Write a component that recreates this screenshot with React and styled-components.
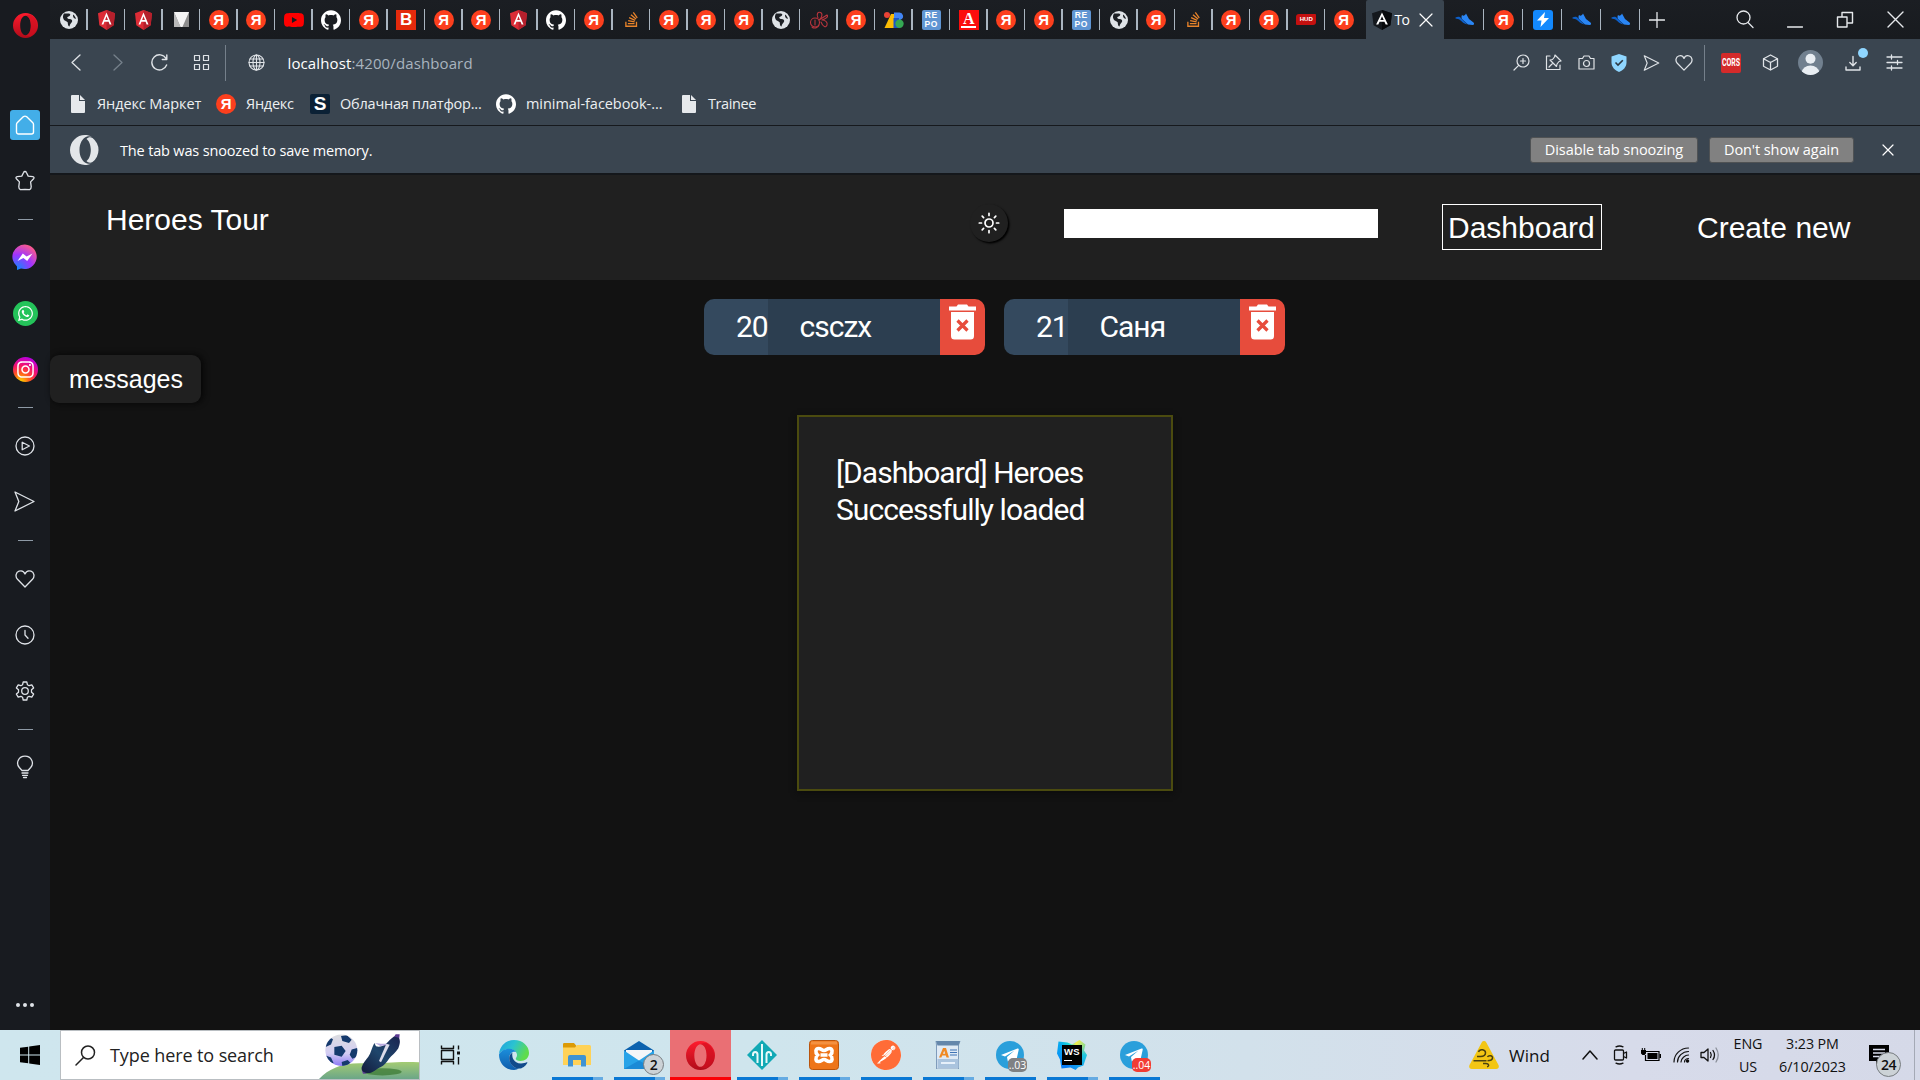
import React from 'react';
import styled, { createGlobalStyle, css } from 'styled-components';
import { SiGithub, SiYoutube, SiPostman } from 'react-icons/si';
import { FaStackOverflow, FaWhatsapp, FaInstagram } from 'react-icons/fa';

const Global = createGlobalStyle`
  * { box-sizing: border-box; }
  html, body { margin: 0; padding: 0; background: #121212; overflow: hidden; }
  svg { display: block; flex: none; }
`;

const ui = css`
  font-family: 'Open Sans', 'Noto Sans', sans-serif;
  white-space: nowrap;
`;

/* ---------- window frame ---------- */
const Screen = styled.div`
  width: 1920px;
  height: 1080px;
  display: flex;
  flex-direction: column;
  background: #121212;
`;
const Browser = styled.div`
  display: flex;
  height: 1030px;
`;
const Sidebar = styled.nav`
  width: 50px;
  display: flex;
  flex-direction: column;
  align-items: center;
  background: #181b20;
`;
const SideLogo = styled.div`
  height: 96.6px;
  padding-top: 13px;
`;
const SideItem = styled.div`
  height: 56.2px;
  display: flex;
  align-items: center;
  justify-content: center;
  color: #dfe3e8;
`;
const SideDash = styled.div`
  height: 20.2px;
  display: flex;
  align-items: center;
  &::before {
    content: '';
    width: 15px;
    height: 1px;
    background: #8e9aa6;
  }
`;
const HomeTile = styled.div`
  width: 30px;
  height: 30px;
  border-radius: 3px;
  background: #43aee8;
  display: flex;
  align-items: center;
  justify-content: center;
  color: #fff;
`;
const RoundApp = styled.div`
  width: 25px;
  height: 25px;
  border-radius: 50%;
  background: ${(p) => p.$bg};
  display: flex;
  align-items: center;
  justify-content: center;
  color: #fff;
`;
const SideMore = styled.div`
  margin-top: auto;
  height: 50px;
  display: flex;
  align-items: center;
  gap: 3px;
`;
const MoreDot = styled.i`
  width: 4px;
  height: 4px;
  border-radius: 50%;
  background: #dfe3e8;
`;
const Window = styled.div`
  flex: 1;
  min-width: 0;
  display: flex;
  flex-direction: column;
`;

/* ---------- tab strip ---------- */
const TabStrip = styled.div`
  height: 39px;
  display: flex;
  background: linear-gradient(#1b1e23, #181b1f);
  color: #e6e9ec;
`;
const Tab = styled.div`
  width: ${(p) => p.$w || 37.5}px;
  height: 39px;
  display: flex;
  align-items: center;
  justify-content: center;
  position: relative;
  flex: none;
  &::after {
    content: '';
    position: absolute;
    right: 0;
    top: 9px;
    height: 21px;
    width: 1.5px;
    background: ${(p) => (p.$last ? 'transparent' : '#a9b4bf')};
  }
`;
const ActiveTab = styled.div`
  ${ui}
  width: 78px;
  height: 39px;
  margin: 0 1.5px 0 3px;
  padding-left: 6px;
  display: flex;
  align-items: center;
  background: #3a4550;
  color: #fff;
  font-size: 14px;
  border-radius: 2px 2px 0 0;
`;
const TabTitle = styled.span`
  width: 17px;
  margin: 0 7px 0 3px;
  letter-spacing: -0.6px;
`;
const WindowButtons = styled.div`
  margin-left: auto;
  display: flex;
  align-items: center;
`;
const WinButton = styled.div`
  width: ${(p) => p.$w}px;
  display: flex;
  justify-content: center;
  padding-top: ${(p) => p.$top || 0}px;
`;
const YaDisc = styled.span`
  width: 20px;
  height: 20px;
  border-radius: 50%;
  background: #fc3f1d;
  color: #fff;
  display: flex;
  align-items: center;
  justify-content: center;
  font: 700 15px/20px 'Liberation Sans', sans-serif;
`;
const Tile = styled.span`
  width: ${(p) => p.$w || 20}px;
  height: 20px;
  border-radius: ${(p) => p.$r || 0}px;
  background: ${(p) => p.$bg};
  color: #fff;
  display: flex;
  flex-direction: column;
  align-items: center;
  justify-content: center;
  font: ${(p) => p.$font || "700 17px/18px 'Liberation Sans', sans-serif"};
  letter-spacing: ${(p) => p.$ls || 0}px;
`;
const LetterRule = styled.i`
  width: 15px;
  height: 2px;
  margin-top: 1px;
  background: #fff;
`;
const HudBadge = styled.span`
  width: 20px;
  height: 11px;
  border-radius: 3px 1px 3px 1px;
  background: #c4100f;
  color: #fff;
  text-align: center;
  font: 700 6px/11px 'Liberation Sans', sans-serif;
`;

/* ---------- toolbar ---------- */
const AddressBar = styled.div`
  height: 48px;
  display: flex;
  align-items: center;
  padding-bottom: 1px;
  background: #3a4550;
  color: #dfe3e7;
`;
const ToolSlot = styled.div`
  width: ${(p) => p.$w}px;
  display: flex;
  justify-content: center;
  color: ${(p) => p.$c || '#dfe3e7'};
  flex: none;
`;
const ToolRule = styled.div`
  width: 1px;
  height: 36px;
  background: #75808b;
  flex: none;
`;
const Url = styled.div`
  ${ui}
  flex: 1;
  margin-left: 1.5px;
  font-size: 15px;
  letter-spacing: 0.12px;
  color: #a9b4bf;
  b { font-weight: 400; color: #fff; }
`;
const DownloadWrap = styled.div`
  position: relative;
`;
const DownloadDot = styled.i`
  position: absolute;
  left: 13px;
  top: -7px;
  width: 10px;
  height: 10px;
  border-radius: 50%;
  background: #8fd6ff;
`;
const CorsTile = styled.span`
  width: 20px;
  height: 20px;
  border-radius: 2px;
  background: #d42a2a;
  color: #fff;
  display: flex;
  align-items: center;
  justify-content: center;
  font: 700 10px/20px 'Roboto', sans-serif;
  span { transform: scaleX(0.7); }
`;
const Bookmarks = styled.div`
  ${ui}
  height: 39px;
  display: flex;
  padding: 0 0 5px 21px;
  align-items: center;
  background: #3a4550;
  border-bottom: 1px solid #16191d;
  color: #eceff1;
  font-size: 14.5px;
`;
const Bookmark = styled.div`
  display: flex;
  align-items: center;
  width: ${(p) => p.$w}px;
  gap: ${(p) => p.$gap}px;
  letter-spacing: ${(p) => p.$ls}px;
`;
const BookmarkLabel = styled.span`
  margin-bottom: 1px;
`;
const SnoozeBar = styled.div`
  ${ui}
  height: 49px;
  display: flex;
  align-items: center;
  padding: 1px 26px 0 20px;
  background: #3a4550;
  border-bottom: 2px solid #14171b;
  color: #fff;
  font-size: 14.5px;
`;
const SnoozeText = styled.div`
  flex: 1;
  margin: 0 0 0 20px;
  letter-spacing: -0.16px;
`;
const SnoozeButton = styled.button`
  ${ui}
  width: ${(p) => p.$w}px;
  height: 26px;
  margin-right: ${(p) => p.$mr}px;
  padding: 0 0 1px;
  border: 1px solid #4f5254;
  border-radius: 3px;
  background: #818181;
  color: #fff;
  font-size: 14.5px;
  letter-spacing: -0.08px;
`;

/* ---------- page ---------- */
const Page = styled.div`
  flex: 1;
  display: flex;
  flex-direction: column;
  background: #121212;
  color: #fff;
`;
const Header = styled.header`
  height: 105px;
  display: flex;
  align-items: flex-start;
  padding: 27px 65px 0 56px;
  background: #202020;
  font: 30px/34px 'Liberation Sans', Arial, sans-serif;
`;
const Brand = styled.div`
  flex: 1;
  margin-top: 1px;
`;
const ThemeButton = styled.div`
  width: 38px;
  height: 38px;
  margin: 2px 56px 0 0;
  border-radius: 50%;
  display: flex;
  align-items: center;
  justify-content: center;
  background: #202020;
  box-shadow: 1.5px 1.5px 2px #000;
`;
const SearchField = styled.input`
  width: 314px;
  height: 29px;
  margin: 7px 64px 0 0;
  border: 0;
  background: #fff;
`;
const NavLink = styled.a`
  height: 46px;
  padding: 6px 5px 0;
  margin-top: 2px;
  margin-left: ${(p) => p.$ml || 0}px;
  border: 1px solid ${(p) => (p.$active ? '#fff' : 'transparent')};
  width: ${(p) => p.$w}px;
  white-space: nowrap;
`;
const Heroes = styled.div`
  display: flex;
  justify-content: center;
  padding-top: 19px;
  font: 30px/56px Roboto, sans-serif;
  letter-spacing: -1px;
`;
const HeroCard = styled.div`
  width: 281px;
  height: 56px;
  margin-left: 19px;
  display: flex;
  overflow: hidden;
  border-radius: 10px;
`;
const HeroId = styled.div`
  width: 64px;
  padding-left: 32px;
  background: #34495e;
`;
const HeroName = styled.div`
  flex: 1;
  padding-left: 31.5px;
  background: #2c3e50;
`;
const HeroDelete = styled.div`
  width: 45px;
  padding: 5px 0 0 9px;
  background: #e74c3c;
`;
const Messages = styled.div`
  width: 151px;
  height: 48px;
  padding-left: 19px;
  border-radius: 9px;
  background: #202020;
  box-shadow: 2px 0 6px #050505;
  font: 25px/48px 'Liberation Sans', Arial, sans-serif;
`;
const LogPanel = styled.div`
  align-self: center;
  width: 376px;
  height: 376px;
  margin-top: 12px;
  padding: 37px 36px 36px 37px;
  border: 2px solid #4b4b0f;
  background: #202020;
  box-shadow: 0 2px 6px #0c0c0c;
  font: 30px/37px Roboto, sans-serif;
  letter-spacing: -0.94px;
`;

/* ---------- taskbar ---------- */
const Taskbar = styled.footer`
  ${ui}
  height: 50px;
  display: flex;
  align-items: stretch;
  background: linear-gradient(90deg, #cfe6ee 0%, #cfe5ed 40%, #d2e1eb 65%, #d7dbea 85%, #d5d9e8 100%);
  color: #111;
`;
const StartButton = styled.div`
  width: 60px;
  display: flex;
  align-items: center;
  justify-content: center;
`;
const SearchBox = styled.div`
  width: 360px;
  display: flex;
  align-items: center;
  padding-left: 14px;
  border: 1px solid #b9bec2;
  background: #fff;
  font-size: 18px;
  letter-spacing: -0.1px;
  color: #222;
`;
const SearchLabel = styled.span`
  flex: 1;
  margin-left: 14px;
`;
const TaskCell = styled.div`
  width: ${(p) => p.$w || 62}px;
  display: flex;
  align-items: center;
  justify-content: center;
  position: relative;
  background: ${(p) => (p.$active ? '#ea6f74' : 'transparent')};
  &::after {
    content: '';
    position: absolute;
    bottom: 0;
    left: ${(p) => (p.$active ? 0 : 6)}px;
    right: ${(p) => (p.$active ? 0 : 5)}px;
    height: 3px;
    background: ${(p) =>
      p.$active ? '#fb0007' : p.$run === 2 ? 'linear-gradient(90deg,#0a78d4 41px,#66abe2 41px)' : p.$run ? '#0a78d4' : 'transparent'};
  }
`;
const CountBadge = styled.span`
  position: absolute;
  left: ${(p) => p.$x}px;
  top: ${(p) => p.$y}px;
  width: ${(p) => p.$s}px;
  height: ${(p) => p.$s}px;
  border: 1px solid #777c80;
  border-radius: 50%;
  background: #ccd2d6;
  text-align: center;
  font-size: ${(p) => p.$fs}px;
  font-weight: 600;
  line-height: ${(p) => p.$s - 2}px;
  letter-spacing: -0.5px;
`;
const ChatBadge = styled.span`
  position: absolute;
  left: 29px;
  top: 28px;
  width: 19px;
  height: 14px;
  border-radius: 5px;
  background: ${(p) => p.$bg};
  color: #fff;
  text-align: center;
  font-size: 10.5px;
  line-height: 14px;
`;
const PostmanDisc = styled.div`
  border-radius: 50%;
  background: #fff;
`;
const WebstormTile = styled.div`
  width: 30px;
  height: 30px;
  padding: 5px;
  background: conic-gradient(from 20deg, #f6ee4a, #21c7e0 70deg, #087cfa 190deg, #07a8f0 290deg, #1de0d0 330deg, #f6ee4a);
  clip-path: polygon(5% 5%, 35% 8%, 50% 15%, 75% 0, 95% 15%, 90% 35%, 100% 50%, 88% 85%, 70% 92%, 62% 100%, 45% 92%, 15% 95%, 10% 65%, 0 45%);
`;
const WebstormFace = styled.div`
  width: 20px;
  height: 20px;
  padding: 1px 0 0 2px;
  background: #000;
  color: #fff;
  font: 700 9.5px/11px 'Liberation Sans', sans-serif;
  letter-spacing: 0.3px;
  &::after {
    content: '';
    display: block;
    width: 8px;
    height: 1px;
    margin-top: 3px;
    background: #fff;
  }
`;
const Tray = styled.div`
  margin-left: auto;
  display: flex;
  align-items: center;
`;
const TraySlot = styled.div`
  width: ${(p) => p.$w}px;
  display: flex;
  justify-content: center;
`;
const Weather = styled.div`
  width: 107px;
  display: flex;
  align-items: center;
  gap: 10px;
  font-size: 17px;
`;
const TwoLines = styled.div`
  width: ${(p) => p.$w}px;
  margin-right: ${(p) => p.$mr || 0}px;
  text-align: center;
  font-size: 14.3px;
  line-height: 23px;
  letter-spacing: -0.1px;
  padding-bottom: ${(p) => p.$pb || 0}px;
`;
const Notifications = styled.div`
  width: 58px;
  height: 50px;
  margin-right: 5px;
  position: relative;
  border-right: 1px solid #a4a9b5;
  padding: 15px 0 0 12px;
`;

/* ---------- drawings ---------- */
const Line = ({ w, h, vb, sw = 1.3, children }) => (
  <svg width={w} height={h || w} viewBox={vb || `0 0 ${w} ${h || w}`} fill="none" stroke="currentColor" strokeWidth={sw} strokeLinecap="round" strokeLinejoin="round">
    {children}
  </svg>
);
const OperaO = ({ w, h }) => (
  <svg width={w} height={h} viewBox="0 0 24 24">
    <defs>
      <linearGradient id="opR" x1="0" y1="0" x2="0" y2="1">
        <stop offset="0" stopColor="#ff1b2d" />
        <stop offset="1" stopColor="#b00c1a" />
      </linearGradient>
    </defs>
    <path fillRule="evenodd" fill="url(#opR)" d="M12 0a12 12 0 1 0 0 24a12 12 0 1 0 0-24zM12 2.600c3 0 5.100 4.200 5.100 9.400s-2.100 9.400-5.100 9.400S6.900 17.200 6.900 12S9 2.600 12 2.600z" />
    <path fill="#d00f20" opacity=".6" d="M12 2.600c1.500-.9 3.500-1.300 5.400-.8A12 12 0 0 1 17.400 22.200c-1.900.5-3.900.1-5.400-.8c3 0 5.100-4.200 5.100-9.400S15 2.600 12 2.600z" />
  </svg>
);
const OperaMono = () => (
  <svg width="30" height="30" viewBox="0 0 30 30">
    <path d="M15 0a15 15 0 1 0 0 30c2.500 0 4.700-.6 6.700-1.800c-1.500.7-3.200.8-4.700.2C12.500 27 9.500 21.500 9.500 15S12.500 3 17 1.600c1.500-.5 3.200-.4 4.700.2C19.700.6 17.500 0 15 0z" fill="#e3e6e9" />
    <path d="M16.500 4C18 2.200 20.500 1.900 22.500 3a15 15 0 0 1 0 24c-2 1.100-4.500.8-6-1C19 24.500 20.800 20 20.800 15S19 5.500 16.500 4z" fill="#e3e6e9" />
  </svg>
);
const Globe = () => (
  <svg width="18" height="18" viewBox="0 0 18 18">
    <circle cx="9" cy="9" r="9" fill="#dfe3e7" />
    <path d="M4 2.500c2 .2 5-.4 6 .6s-.5 2.200-2 2.600S7.500 8 9.500 8s3 1 2.600 2.600S9.800 13 9.500 15.500c-1.500-.4-1.700-2.400-1.700-3.700S4.500 10 3.800 8.500S2.300 5.500 4 2.500zM13 3.500c1.500 1 2.600 2.500 2.900 4.500c-1.600-.3-3.300-1.800-2.900-4.500z" fill="#1d2025" />
  </svg>
);
const Angular = ({ dark }) => (
  <svg width={dark ? 20 : 17} height="20" viewBox="0 0 18 20" preserveAspectRatio="none">
    <path d="M9 0l9 3.200l-1.400 12L9 20l-7.600-4.800L0 3.200z" fill={dark ? '#14181d' : '#dd2c36'} />
    <path d="M9 0l9 3.200l-1.400 12L9 20z" fill={dark ? '#07090c' : '#b5202c'} />
    <path fillRule="evenodd" d="M9 2.400l5.300 12h-2l-1.100-2.700H6.800l-1.100 2.700h-2zM9 6.300L7.500 10h3z" fill="#fff" />
  </svg>
);
const VIcon = () => (
  <svg width="15" height="15" viewBox="0 0 16 16">
    <path d="M0 0h16v16H0z" fill="#8d8d8d" />
    <path d="M0 0h16L12 9L9 16H7z" fill="#f4f4f4" />
    <path d="M0 0l7 16H0z" fill="#b9b9b9" />
  </svg>
);
const Sneaker = () => (
  <svg width="20" height="13" viewBox="0 0 20 13">
    <path d="M7 2c1.500 1.500 3 .5 4-1.500l3 5.500l4.500 3.500c1 1 .8 2.500-1 2.500L13 11.500L8 7C6.500 6 6 3.500 7 2z" fill="#2a86f5" />
    <path d="M.5 4.500C3 3.300 5 3.500 6.500 5.500l6 6C9 11 7 8.500 5 7C3.500 6 2 5.700.5 5.500z" fill="#0d5fc8" />
  </svg>
);
const Doodle = () => (
  <Line w={20} sw={1.1}>
    <g stroke="#b9353d">
      <circle cx="6" cy="12.500" r="4.500" />
      <path d="M9 8C7 4 9 1.500 11.500 2.500S13 8 10 10l8-5c2 2-2 4-5 5c3 0 6 2 5 5s-4 2-6-3M6 10v5M3 17c2 2 6 1 7-2" />
    </g>
  </Line>
);
const ABIcon = () => (
  <svg width="20" height="16" viewBox="0 0 20 16">
    <path d="M7 2h4v14H.5z" fill="#fbbc04" />
    <circle cx="3" cy="3" r="3" fill="#ea4335" />
    <path d="M10 .5h5a3.700 3.700 0 0 1 2 7L10 11z" fill="#4285f4" />
    <path d="M9.500 6h5.500v10H9.500z" fill="#1a56c4" />
    <circle cx="15.500" cy="11.800" r="4.200" fill="#34a853" />
  </svg>
);
const FileIcon = () => (
  <svg width="14" height="18" viewBox="0 0 14 18">
    <path d="M1 0h7v6h6v11a1 1 0 0 1-1 1H1a1 1 0 0 1-1-1V1a1 1 0 0 1 1-1z" fill="#e6e9ec" />
    <path d="M9 0l5 5H9z" fill="#e6e9ec" />
  </svg>
);
const Cross = ({ s, sw }) => (
  <Line w={s} sw={sw}><path d={`M1 1L${s - 1} ${s - 1}M${s - 1} 1L1 ${s - 1}`} /></Line>
);
const HEART = 'M10 18L2.500 10.300C0 7.500 .8 3.300 4 2.200C6.500 1.300 9 2.500 10 5c1-2.500 3.500-3.700 6-2.800c3.200 1.100 4 5.300 1.500 8.100z';
const SEND = 'M1 1l19 9.500L1 20l3.800-9.500z';
const Trash = () => (
  <svg width="27" height="36" viewBox="0 0 27 36">
    <path d="M0 2.500h7.500L9 .5h9l1.500 2H27v4H0z" fill="#fff" />
    <path d="M2 8h23v24a3.500 3.500 0 0 1-3.500 3.500h-16A3.500 3.500 0 0 1 2 32z" fill="#fff" />
    <path d="M8.500 16.500l10 10M18.500 16.500l-10 10" stroke="#e74c3c" strokeWidth="3.200" />
  </svg>
);
const Sun = () => (
  <Line w={22} sw={1.700}>
    <circle cx="11" cy="11" r="4" />
    <path d="M11 1.300v2.200M11 18.500v2.200M1.300 11h2.200M18.500 11h2.200M4.200 4.200l1.400 1.400M16.400 16.400l1.400 1.400M4.200 17.800l1.400-1.400M16.400 5.600l1.400-1.400" />
  </Line>
);
const Messenger = () => (
  <svg width="26" height="26" viewBox="0 0 26 26">
    <defs>
      <radialGradient id="msg" cx=".2" cy="1" r="1.100">
        <stop offset="0" stopColor="#0a8cff" />
        <stop offset=".55" stopColor="#a033ff" />
        <stop offset="1" stopColor="#ff5c87" />
      </radialGradient>
    </defs>
    <path d="M13 .5A12.300 12.300 0 1 1 9 24.600L5 26v-3.600A12.300 12.300 0 0 1 13 .5z" fill="url(#msg)" />
    <path d="M5.500 17L10.800 9.500l3.800 3L20.500 9.500l-5.300 7.500l-3.800-3z" fill="#fff" />
  </svg>
);
const Gear = () => (
  <Line w={20} vb="0 0 20 20">
    <path d="M8.200 1h3.600l.6 2.700l1.700 1l2.700-.9l1.800 3.100L16.500 8.800v2.400l2.100 1.900l-1.800 3.100l-2.700-.9l-1.700 1l-.6 2.700H8.200l-.6-2.700l-1.700-1l-2.700.9l-1.800-3.100l2.100-1.900V8.800L1.400 6.900l1.800-3.100l2.700.9l1.700-1z" />
    <circle cx="10" cy="10" r="3.300" />
  </Line>
);
const Football = () => (
  <svg width="100" height="48" viewBox="0 9 300 147" preserveAspectRatio="none">
    <defs>
      <linearGradient id="grass" x1="0" y1="0" x2="0" y2="1">
        <stop offset="0" stopColor="#a3cb73" />
        <stop offset="1" stopColor="#6ba688" />
      </linearGradient>
      <linearGradient id="ball" x1="0" y1="0" x2="0" y2="1">
        <stop offset="0" stopColor="#dcdde0" />
        <stop offset=".6" stopColor="#d3cdf3" />
        <stop offset="1" stopColor="#8b78f5" />
      </linearGradient>
      <linearGradient id="boot" x1="0" y1="1" x2="1" y2="0">
        <stop offset="0" stopColor="#131b3c" />
        <stop offset=".5" stopColor="#1f466c" />
        <stop offset="1" stopColor="#1a2350" />
      </linearGradient>
      <clipPath id="ballClip"><circle cx="67" cy="68" r="48" /></clipPath>
    </defs>
    <path d="M0 156C30 124 70 106 130 108C190 110 220 102 300 105V156z" fill="url(#grass)" />
    <ellipse cx="190" cy="134" rx="58" ry="11" fill="#3c7a35" opacity=".75" />
    <circle cx="67" cy="68" r="48" fill="url(#ball)" />
    <g clipPath="url(#ballClip)" fill="#153a6d">
      <path d="M46 58l22-4l12 16l-12 18l-22-6zM66 24l18-2l14 14l-8 10l-20-6zM98 66l20-6l2 26l-20 8l-8-12zM18 42l14-14l10 6l-6 16l-16 8zM20 84l16 6l8 18l-18-2zM68 104l18-6l8 8l-10 12l-14-2z" />
    </g>
    <path d="M128 128l4 12l10-1l2-10l10-4l4 8l9-4l-2-10l9-5l5 6l7-7l-3-8l12-12l8 3l3-10l-5-6l12-14l8 2l2-11l10-2l-1-12l8-4l2-20l-12 0l-36 60l-60 40z" fill="#5b3a92" />
    <path d="M166 46l5 10c10 3 20 0 30-8c8-6 14-16 24-22l14 4c6 8 4 20-1 32c-8 14-20 22-28 32c-8 12-14 20-26 26c-14 6-22 18-36 18c-12 0-22-6-20-18c4-12 12-22 20-32c8-12 10-26 18-42z" fill="url(#boot)" />
    <path d="M202 48l10 3l-26 54l-6-4z" fill="#dcdcea" />
    <path d="M168 46l16 9l16-2l4-5l-18 0z" fill="#b9a9e0" />
  </svg>
);
const Edge = () => (
  <svg width="30" height="30" viewBox="0 0 30 30">
    <defs>
      <linearGradient id="eg" x1="0" y1="0" x2="1" y2=".4">
        <stop offset="0" stopColor="#1f9fe0" />
        <stop offset=".5" stopColor="#2bc3d0" />
        <stop offset="1" stopColor="#5fdc4c" />
      </linearGradient>
      <linearGradient id="eb" x1="0" y1="0" x2="0" y2="1">
        <stop offset="0" stopColor="#1b8fdc" />
        <stop offset="1" stopColor="#0f5cab" />
      </linearGradient>
    </defs>
    <path d="M0 14C.8 6 7 0 15 0c9 0 15 6.200 15 13c0 5-4 8-8.500 8c-3.500 0-5.200-1.300-4.700-2.600c.4-1 1.300-1.600 1.200-3.600C17.800 11.500 14.500 9 10.500 9C5.500 9 1.500 11.500 0 14z" fill="url(#eg)" />
    <path d="M0 14.500C1.500 11 5.500 8.700 10.500 8.700c3 0 5.500 1.400 6.700 3.300c-3.500-1.200-7 1.500-7 6c0 5.800 5 10.500 9.800 10.600C18.500 29.500 17 30 15 30C6.500 30 0 23.500 0 14.500z" fill="url(#eb)" />
    <path d="M10.200 18c0-2.500 1.500-4.500 3.200-5.200c-.8 4 1 10.700 8.600 10.700c2.500 0 4.300-.6 5.600-1.200c.6-.2 1 .2.700.7C26.500 26 23.500 28.600 20 28.600C15 28.600 10.200 24 10.200 18z" fill="#114a8b" />
  </svg>
);
const Folder = () => (
  <svg width="28" height="24" viewBox="0 0 28 24">
    <path d="M0 1.200A1.200 1.200 0 0 1 1.200 0H11l2.500 3H27v5H0z" fill="#dc9a05" />
    <path d="M0 4.500h12L14 2h12.500A1.500 1.500 0 0 1 28 3.500V22H0z" fill="#ffd257" />
    <path d="M5 23.500V14a2 2 0 0 1 2-2h14a2 2 0 0 1 2 2v9.500h-5V17h-8v6.500z" fill="#3f93d3" />
  </svg>
);
const Mail = () => (
  <svg width="30" height="28" viewBox="0 0 30 28">
    <path d="M0 9.500L15 0l15 9.500V28H0z" fill="#0c62ae" />
    <path d="M2 9h26v3L15 21L2 12z" fill="#f4f6f8" />
    <path d="M0 9.500l15 10L30 9.500V28H0z" fill="#28a3e8" />
    <path d="M0 28L15 19.500L30 28z" fill="#1b8ad6" />
  </svg>
);
const TelegramIcon = () => (
  <svg width="28" height="28" viewBox="0 0 28 28">
    <circle cx="14" cy="14" r="14" fill="#2a9fdb" />
    <path d="M5 14L21.500 7.500c.8-.3 1.400.2 1.200 1.200L20 21c-.2.9-.9 1-1.600.6L14 18.400l-2.200 2.200l-.8-4.600l7.500-6.500L9 15.500z" fill="#fff" />
  </svg>
);
const Trident = () => (
  <svg width="30" height="30" viewBox="0 0 30 30">
    <path d="M15 0l15 15l-15 15L0 15z" fill="#11a9b5" />
    <path d="M15 4v22M6 16v-1.500c0-3.500 4.500-3.500 4.500 0V23M24 16v-1.500c0-3.500-4.500-3.500-4.500 0V23" fill="none" stroke="#e8fafa" strokeWidth="2" />
  </svg>
);
const XamppIcon = () => (
  <svg width="30" height="30" viewBox="0 0 30 30">
    <rect x=".5" y=".5" width="29" height="29" rx="3" fill="#ee7519" stroke="#b9540c" />
    <path d="M2 1.500h26v3H2z" fill="#f9a35c" opacity=".6" />
    <path d="M9.500 8.500c3 0 3 2 5.500 2s2.500-2 5.500-2s3.500 4 1 6.500c2.500 2.500 2 6.500-1 6.500s-3-2-5.500-2s-2.500 2-5.500 2s-3.500-4-1-6.500c-2.500-2.500-2-6.500 1-6.500zM11.500 15h7" fill="none" stroke="#fff" strokeWidth="3.600" />
  </svg>
);
const WordDoc = () => (
  <svg width="26" height="28" viewBox="0 0 26 28">
    <path d="M1 0h24l-1.500 4V28H1.500V4z" fill="#dfeaf5" stroke="#7f9cbb" />
    <path d="M1 0h24l-1.500 4.500h-21z" fill="#6487ab" />
    <path d="M2.500 18h21v9h-21z" fill="#aac4de" />
    <path d="M15 9h7M15 11.500h7M15 14h7" stroke="#3f73b5" strokeWidth="1.200" />
    <path d="M6 22h14" stroke="#e6f0fa" strokeWidth="2" />
    <path fillRule="evenodd" d="M8 7h3l3 9.500h-2.500l-.7-2H7.200l-.8 2H4zM9.200 9.800L8 12.800h2.200z" fill="#f08a24" />
  </svg>
);
const Wind = () => (
  <svg width="30" height="28" viewBox="0 0 30 28">
    <path d="M12.700 1.500a2.600 2.600 0 0 1 4.600 0L29.500 24c.9 1.800 0 4-2.300 4H2.800C.5 28-.4 25.800.5 24z" fill="#f3c614" />
    <path d="M9.500 11c1.200-3.500 7-2.700 7 .8c0 2.600-2.500 3.700-5 3.700H8M4.500 19.800h13M18.500 16c1-2 5.500-1.500 5 1.200c-.4 2-2.500 2.600-5 2.600M14 22.500h3c3 0 3.500 3 1 3.200" fill="none" stroke="#4a4110" strokeWidth="1.500" />
  </svg>
);

const Ya = () => <YaDisc>Я</YaDisc>;
const Repo = () => (
  <Tile $bg="#5f95d3" $r={2} $w={19} $font="700 8.500px/9px 'Liberation Sans', sans-serif" $ls={0.5}>
    <span>RE</span><span>PO</span>
  </Tile>
);
const favicons = {
  globe: <Globe />,
  ng: <Angular />,
  v: <VIcon />,
  ya: <Ya />,
  yt: <SiYoutube size={20} color="#ff0000" />,
  gh: <SiGithub size={20} color="#fff" />,
  b: <Tile $bg="#e42a0c">B</Tile>,
  so: <FaStackOverflow size={17} color="#e8832a" />,
  dd: <Doodle />,
  ab: <ABIcon />,
  repo: <Repo />,
  a: <Tile $bg="#fb0d0d" $font="700 16px/13px 'Liberation Serif', serif">A<LetterRule /></Tile>,
  hud: <HudBadge>HUD</HudBadge>,
  sn: <Sneaker />,
  bolt: (
    <Tile $bg="#1389fd" $r={3}>
      <svg width="12" height="15" viewBox="0 0 12 15"><path d="M8 0L0 8.500h4.500L3.500 15L12 6H7z" fill="#fff" /></svg>
    </Tile>
  ),
};
const leftTabs = 'globe ng ng v ya ya yt gh ya b ya ya ng gh ya so ya ya ya globe dd ya ab repo a ya ya repo globe ya so ya ya hud ya'.split(' ');
const rightTabs = ['sn', 'ya', 'bolt', 'sn', 'sn'];

export default function App() {
  return (
    <Screen>
      <Global />
      <Browser>
        <Sidebar>
          <SideLogo><OperaO w={25} h={25} /></SideLogo>
          <SideItem>
            <HomeTile><Line w={20} sw={1.4}><path d="M1.500 9.500Q1.500 8.500 2.200 7.800L8.500 1.600Q10 .6 11.500 1.600L17.800 7.800Q18.500 8.500 18.500 9.500V17a2 2 0 0 1-2 2h-13a2 2 0 0 1-2-2z" /></Line></HomeTile>
          </SideItem>
          <SideItem><Line w={22}><path d="M11 1.500q1 0 1.400 1l1.800 3.600l4.600.6q2 .5.800 2l-3 3.200l.6 4.800q0 2.300-1.600 3L11 19.300l-4.600.4q-1.600-.7-1.600-3l.6-4.800l-3-3.200q-1.200-1.500.8-2l4.600-.6l1.800-3.600q.400-1 1.400-1z" /></Line></SideItem>
          <SideDash />
          <SideItem><Messenger /></SideItem>
          <SideItem><RoundApp $bg="#24c35a"><FaWhatsapp size={17} /></RoundApp></SideItem>
          <SideItem><RoundApp $bg="radial-gradient(circle at 30% 100%, #ffc800 5%, #ff5a1f 30%, #f5136b 55%, #c400d0 80%, #5a20ff)"><FaInstagram size={19} /></RoundApp></SideItem>
          <SideDash />
          <SideItem><Line w={20}><circle cx="10" cy="10" r="9" /><path d="M7.200 6.200v7.600l7.200-3.800z" /></Line></SideItem>
          <SideItem><Line w={22}><path d={SEND} /></Line></SideItem>
          <SideDash />
          <SideItem><Line w={20}><path d={HEART} /></Line></SideItem>
          <SideItem><Line w={20}><circle cx="10" cy="10" r="9" /><path d="M10 5.500V10l3 3.200" /></Line></SideItem>
          <SideItem><Gear /></SideItem>
          <SideDash />
          <SideItem><Line w={18} h={24}><path d="M6 15.500L3.300 12.500C-.5 8 2.500 1.200 9 1.200s9.500 6.800 5.700 11.300L12 15.500zM6 18h6M6.500 20.300h5M7.500 22.500h3" /></Line></SideItem>
          <SideMore><MoreDot /><MoreDot /><MoreDot /></SideMore>
        </Sidebar>

        <Window>
          <TabStrip>
            {leftTabs.map((k, i) => (
              <Tab key={i} $last={i === leftTabs.length - 1}>{favicons[k]}</Tab>
            ))}
            <ActiveTab>
              <Angular dark />
              <TabTitle>To</TabTitle>
              <Cross s={14} sw={1.2} />
            </ActiveTab>
            {rightTabs.map((k, i) => (
              <Tab key={i} $w={39}>{favicons[k]}</Tab>
            ))}
            <Tab $w={34} $last><Line w={16} sw={1.300}><path d="M8 .5v15M.5 8h15" /></Line></Tab>
            <WindowButtons>
              <WinButton $w={50}><Line w={20}><circle cx="8.500" cy="7.500" r="6.500" /><path d="M13 12.500l5 5" /></Line></WinButton>
              <WinButton $w={50} $top={14}><Line w={16} h={2} sw={1.500}><path d="M.5 1h15" /></Line></WinButton>
              <WinButton $w={50}><Line w={18} sw={1.400}><path d="M1.500 6h9.500v10H1.500zM6 6V1.500h10.500V12H11" /></Line></WinButton>
              <WinButton $w={50}><Cross s={17} sw={1.400} /></WinButton>
            </WindowButtons>
          </TabStrip>

          <AddressBar>
            <ToolSlot $w={51}><Line w={10} h={17}><path d="M9 1L1 8.500L9 16" /></Line></ToolSlot>
            <ToolSlot $w={33} $c="#76818b"><Line w={10} h={17}><path d="M1 1l8 7.500L1 16" /></Line></ToolSlot>
            <ToolSlot $w={50}><Line w={18} sw={1.400}><path d="M16 4.500A7.600 7.600 0 1 0 16.600 11M16.800 1v4.500h-4.500" /></Line></ToolSlot>
            <ToolSlot $w={34}><Line w={17} sw={1.200}><path d="M1.500 1.500h5v5h-5zM10.500 1.500h5v5h-5zM1.500 10.500h5v5h-5zM10.500 10.500h5v5h-5z" /></Line></ToolSlot>
            <ToolSlot $w={7} />
            <ToolRule />
            <ToolSlot $w={60}><Line w={17} sw={1.100}><circle cx="8.500" cy="8.500" r="7.500" /><ellipse cx="8.500" cy="8.500" rx="3.500" ry="7.500" /><path d="M8.500 1v15M1 8.500h15M2 5h13M2 12h13" /></Line></ToolSlot>
            <Url><b>localhost</b>:4200/dashboard</Url>
            <ToolSlot $w={32}><Line w={17} sw={1.200}><circle cx="10" cy="7" r="6" /><path d="M5.700 11.300L1 16M7.500 7h5M10 4.500v5" /></Line></ToolSlot>
            <ToolSlot $w={33}><Line w={17} sw={1.200}><path d="M5 2H1.500v13.500H15V11M10 1l6 6l-2 .5l-2 2.500l-.5 2.500L5 6l2.500-.5L9.500 3zM8 9l-4 4" /></Line></ToolSlot>
            <ToolSlot $w={33}><Line w={17} h={15} sw={1.200}><path d="M1 3.500h3.500L6 1h5l1.500 2.500H16V14H1z" /><circle cx="8.500" cy="8.500" r="3" /></Line></ToolSlot>
            <ToolSlot $w={32}>
              <svg width="16" height="18" viewBox="0 0 16 18">
                <path d="M8 0l7.500 2.500v6c0 4.500-3.500 8-7.500 9.500C4 16.500.5 13 .5 8.500v-6z" fill="#8fd6ff" />
                <path d="M4.500 8.500L7 11l4.800-4.800" fill="none" stroke="#2d3843" strokeWidth="1.600" />
              </svg>
            </ToolSlot>
            <ToolSlot $w={33}><Line w={17} h={16} vb="0 0 21 21" sw={1.500}><path d={SEND} /></Line></ToolSlot>
            <ToolSlot $w={32}><Line w={18} h={17} vb="0 0 20 19" sw={1.400}><path d={HEART} /></Line></ToolSlot>
            <ToolSlot $w={4} />
            <ToolRule />
            <ToolSlot $w={51}><CorsTile><span>CORS</span></CorsTile></ToolSlot>
            <ToolSlot $w={29}><Line w={17} sw={1.300}><path d="M8.500 1l7 3.700v7.600l-7 3.700l-7-3.700V4.700zM1.500 4.700l7 3.800l7-3.800M8.500 8.500V16" /></Line></ToolSlot>
            <ToolSlot $w={51}>
              <svg width="25" height="25" viewBox="0 0 25 25">
                <defs><clipPath id="av"><circle cx="12.500" cy="12.500" r="12.500" /></clipPath></defs>
                <g clipPath="url(#av)">
                  <path d="M0 0h25v25H0z" fill="#71808f" />
                  <circle cx="12.500" cy="8.700" r="5" fill="#e9eef3" />
                  <ellipse cx="12.500" cy="22" rx="8.500" ry="6.500" fill="#e9eef3" />
                </g>
              </svg>
            </ToolSlot>
            <ToolSlot $w={34}>
              <DownloadWrap>
                <Line w={16} sw={1.400}><path d="M8 1.500v9M4.800 7.500L8 10.700l3.200-3.200M1 12v3h14v-3" /></Line>
                <DownloadDot />
              </DownloadWrap>
            </ToolSlot>
            <ToolSlot $w={49}><Line w={17} sw={1.300}><path d="M1 3h15M1 8.500h15M1 14h15M5.500 1v4M11.500 6.500v4M5.500 12v4" /></Line></ToolSlot>
            <ToolSlot $w={1} />
          </AddressBar>

          <Bookmarks>
            <Bookmark $w={145} $gap={12} $ls={-0.1}><FileIcon /><BookmarkLabel>Яндекс Маркет</BookmarkLabel></Bookmark>
            <Bookmark $w={94} $gap={10} $ls={-0.25}><Ya /><BookmarkLabel>Яндекс</BookmarkLabel></Bookmark>
            <Bookmark $w={186} $gap={10} $ls={-0.22}>
              <Tile $bg="#0b2135" $r={2} $font="700 19px/20px 'Liberation Sans', sans-serif">S</Tile>
              <BookmarkLabel>Облачная платфор...</BookmarkLabel>
            </Bookmark>
            <Bookmark $w={186} $gap={10} $ls={-0.05}><SiGithub size={20} color="#fff" /><BookmarkLabel>minimal-facebook-...</BookmarkLabel></Bookmark>
            <Bookmark $w={90} $gap={12} $ls={-0.4}><FileIcon /><BookmarkLabel>Trainee</BookmarkLabel></Bookmark>
          </Bookmarks>

          <SnoozeBar>
            <OperaMono />
            <SnoozeText>The tab was snoozed to save memory.</SnoozeText>
            <SnoozeButton $w={168} $mr={11}>Disable tab snoozing</SnoozeButton>
            <SnoozeButton $w={145} $mr={28}>Don't show again</SnoozeButton>
            <Cross s={12} sw={1.200} />
          </SnoozeBar>

          <Page>
            <Header>
              <Brand>Heroes Tour</Brand>
              <ThemeButton><Sun /></ThemeButton>
              <SearchField />
              <NavLink $active $w={160}>Dashboard</NavLink>
              <NavLink $ml={89} $w={164}>Create new</NavLink>
            </Header>
            <Heroes>
              {[['20', 'csczx'], ['21', 'Саня']].map(([id, name]) => (
                <HeroCard key={id}>
                  <HeroId>{id}</HeroId>
                  <HeroName>{name}</HeroName>
                  <HeroDelete><Trash /></HeroDelete>
                </HeroCard>
              ))}
            </Heroes>
            <Messages>messages</Messages>
            <LogPanel>[Dashboard] Heroes Successfully loaded</LogPanel>
          </Page>
        </Window>
      </Browser>

      <Taskbar>
        <StartButton>
          <svg width="20" height="20" viewBox="0 0 20 20"><path d="M0 2.800l8.200-1.100v7.800H0zM9.200 1.500L20 0v9.500H9.200zM0 10.500h8.200v7.800L0 17.200zM9.200 10.500H20V20L9.200 18.500z" /></svg>
        </StartButton>
        <SearchBox>
          <Line w={21} h={21} sw={1.500}><circle cx="13" cy="7.500" r="6.500" /><path d="M8.500 12.500L1 20" /></Line>
          <SearchLabel>Type here to search</SearchLabel>
          <Football />
        </SearchBox>
        <TaskCell $w={61}>
          <Line w={21} h={20} sw={1.400}><path d="M1.500 .5v3h12v-3M1.500 5.500h12v9h-12zM1.500 19.500v-3h12v3M18.500 .5v4M18.500 12v7.500" strokeLinecap="butt" /><path d="M17 6.500h3v3h-3z" fill="currentColor" stroke="none" /></Line>
        </TaskCell>
        <TaskCell $w={65}><Edge /></TaskCell>
        <TaskCell $run={2}><Folder /></TaskCell>
        <TaskCell $run={2}><Mail /><CountBadge $x={35} $y={24} $s={21} $fs={14}>2</CountBadge></TaskCell>
        <TaskCell $active $w={61}><OperaO w={29} h={29} /></TaskCell>
        <TaskCell $run={2}><Trident /></TaskCell>
        <TaskCell $run={2}><XamppIcon /></TaskCell>
        <TaskCell $run={1}><PostmanDisc><SiPostman size={30} color="#ff6c37" /></PostmanDisc></TaskCell>
        <TaskCell $run={2}><WordDoc /></TaskCell>
        <TaskCell $run={1}><TelegramIcon /><ChatBadge $bg="#7f8184">..03</ChatBadge></TaskCell>
        <TaskCell $run={2}><WebstormTile><WebstormFace>WS</WebstormFace></WebstormTile></TaskCell>
        <TaskCell $run={1}><TelegramIcon /><ChatBadge $bg="#f23c34">..04</ChatBadge></TaskCell>
        <Tray>
          <Weather><Wind />Wind</Weather>
          <TraySlot $w={28}><Line w={16} h={10} sw={1.500}><path d="M1 9l7-8l7 8" /></Line></TraySlot>
          <TraySlot $w={32}><Line w={15} h={20} sw={1.300}><path d="M2.500 5h7a1 1 0 0 1 1 1v8a1 1 0 0 1-1 1h-7a1 1 0 0 1-1-1V6a1 1 0 0 1 1-1zM10.500 8.500l3-1.500v6l-3-1.500M3 1.800q3.500-1.600 7 0M3 18.200q3.500 1.600 7 0" /></Line></TraySlot>
          <TraySlot $w={29}>
            <svg width="20" height="14" viewBox="0 0 20 14">
              <path d="M5 3.500h13v9H4.500V7" fill="none" stroke="#000" strokeWidth="1.200" />
              <path d="M6.500 5h10v6h-10zM18.500 6h1.500v4h-1.500zM0 2h5v3.500L3.500 7h-2L0 5.500zM.8 0h1v2h-1zM3.200 0h1v2h-1z" />
            </svg>
          </TraySlot>
          <TraySlot $w={32}><Line w={17} h={16} sw={1.200}><path d="M1 15C1 7.500 7.500 1 15.500 1M4.500 15C4.500 9.500 9.500 4.500 15.500 4.500M8 15c0-3.500 4-7 7.500-7M11.500 15c0-2 2-3.500 4-3.500" /><circle cx="14.500" cy="14" r="1.200" fill="#000" /></Line></TraySlot>
          <TraySlot $w={26}><Line w={20} h={18} sw={1.300}><path d="M1 6.500h3L8 3v12l-4-3.500H1zM10.500 6.500q1.500 2.500 0 5M13 4.500q3 4.500 0 9" /><path d="M16 2q4.500 7 0 14" stroke="#8b909a" /></Line></TraySlot>
          <TwoLines $w={50}>ENG<br />US</TwoLines>
          <TwoLines $w={79} $pb={1} $mr={5}>3:23 PM<br />6/10/2023</TwoLines>
          <Notifications>
            <svg width="20" height="20" viewBox="0 0 20 20"><path d="M0 0h20v16h-9l-4 4v-4H0z" /><path d="M4 4.500h12M4 8h12M4 11.500h8" stroke="#d7dbea" strokeWidth="1.300" /></svg>
            <CountBadge $x={19} $y={22} $s={25} $fs={14}>24</CountBadge>
          </Notifications>
        </Tray>
      </Taskbar>
    </Screen>
  );
}
